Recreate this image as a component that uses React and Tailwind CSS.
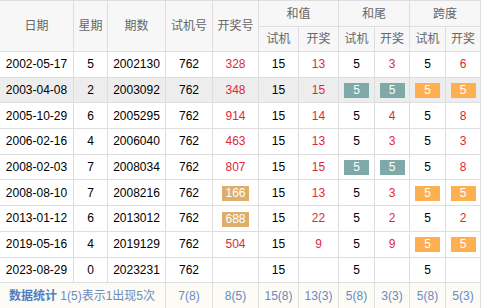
import React from 'react';

const rows = [
  { date: '2002-05-17', wk: '5', no: '2002130', sj: '762', kj: '328', hz: ['15', '13'], hw: ['5', '3'], kd: ['5', '6'] },
  { date: '2003-04-08', wk: '2', no: '2003092', sj: '762', kj: '348', hz: ['15', '15'], hw: ['t5', 't5'], kd: ['o5', 'o5'], hi: true },
  { date: '2005-10-29', wk: '6', no: '2005295', sj: '762', kj: '914', hz: ['15', '14'], hw: ['5', '4'], kd: ['5', '8'] },
  { date: '2006-02-16', wk: '4', no: '2006040', sj: '762', kj: '463', hz: ['15', '13'], hw: ['5', '3'], kd: ['5', '3'] },
  { date: '2008-02-03', wk: '7', no: '2008034', sj: '762', kj: '807', hz: ['15', '15'], hw: ['t5', 't5'], kd: ['5', '8'] },
  { date: '2008-08-10', wk: '7', no: '2008216', sj: '762', kj: 'g166', hz: ['15', '13'], hw: ['5', '3'], kd: ['o5', 'o5'] },
  { date: '2013-01-12', wk: '6', no: '2013012', sj: '762', kj: 'g688', hz: ['15', '22'], hw: ['5', '2'], kd: ['5', '2'] },
  { date: '2019-05-16', wk: '4', no: '2019129', sj: '762', kj: '504', hz: ['15', '9'], hw: ['5', '9'], kd: ['o5', 'o5'] },
  { date: '2023-08-29', wk: '0', no: '2023231', sj: '762', kj: '', hz: ['15', ''], hw: ['5', ''], kd: ['5', ''] },
];

const stats = ['7(8)', '8(5)', '15(8)', '13(3)', '5(8)', '3(3)', '5(8)', '5(3)'];

function Val({ v, red }) {
  if (!v) return null;
  const kind = v[0];
  if (kind === 't' || kind === 'o' || kind === 'g') {
    const bg = kind === 't' ? 'bg-[#7fa8a8]' : kind === 'o' ? 'bg-[#fdb052]' : 'bg-[#deae6c]';
    return (
      <span className={`inline-block min-w-[25px] px-[3px] h-[15px] leading-[15px] text-white align-middle ${bg}`}>
        {v.slice(1)}
      </span>
    );
  }
  return <span className={red ? 'text-[#e0283a]' : 'text-black'}>{v}</span>;
}

const th = 'border border-[#dedede] font-normal text-[#666] bg-[#f7f7f7] p-0';
const td = 'border border-[#dedede] p-0 h-[25.7px] text-center';

export default function App() {
  return (
    <div className="w-[481px] h-[308px] overflow-hidden bg-white font-['Liberation_Sans','Noto_Sans_CJK_SC',sans-serif] text-[12px]">
      <table className="table-fixed border-collapse w-[481px] ml-[-1px] text-center">
        <colgroup>
          <col className="w-[74px]" />
          <col className="w-[34px]" />
          <col className="w-[58px]" />
          <col className="w-[47px]" />
          <col className="w-[46px]" />
          <col className="w-[40px]" />
          <col className="w-[40px]" />
          <col className="w-[36px]" />
          <col className="w-[35px]" />
          <col className="w-[36px]" />
          <col className="w-[35px]" />
        </colgroup>
        <thead>
          <tr className="h-[26px]">
            <th rowSpan={2} className={th}>日期</th>
            <th rowSpan={2} className={th}>星期</th>
            <th rowSpan={2} className={th}>期数</th>
            <th rowSpan={2} className={th}>试机号</th>
            <th rowSpan={2} className={th}>开奖号</th>
            <th colSpan={2} className={th}>和值</th>
            <th colSpan={2} className={th}>和尾</th>
            <th colSpan={2} className={th}>跨度</th>
          </tr>
          <tr className="h-[25px]">
            <th className={th}>试机</th>
            <th className={th}>开奖</th>
            <th className={th}>试机</th>
            <th className={th}>开奖</th>
            <th className={th}>试机</th>
            <th className={th}>开奖</th>
          </tr>
        </thead>
        <tbody>
          {rows.map((r) => (
            <tr key={r.date} className={r.hi ? 'bg-[#ededed]' : 'bg-white'}>
              <td className={td}>{r.date}</td>
              <td className={td}>{r.wk}</td>
              <td className={td}>{r.no}</td>
              <td className={td}>{r.sj}</td>
              <td className={td}><Val v={r.kj} red /></td>
              <td className={td}><Val v={r.hz[0]} /></td>
              <td className={td}><Val v={r.hz[1]} red /></td>
              <td className={td}><Val v={r.hw[0]} /></td>
              <td className={td}><Val v={r.hw[1]} red /></td>
              <td className={td}><Val v={r.kd[0]} /></td>
              <td className={td}><Val v={r.kd[1]} red /></td>
            </tr>
          ))}
          <tr className="bg-[#fcfbf6] text-[#6a8ac0]">
            <td colSpan={3} className={`${td} text-left pl-[9px] h-[27px]`}>
              <span className="font-bold text-[#4f7dbd]">数据统计</span> 1(5)表示1出现5次
            </td>
            {stats.map((s, i) => (
              <td key={i} className={`${td} h-[27px]`}>{s}</td>
            ))}
          </tr>
        </tbody>
      </table>
    </div>
  );
}
